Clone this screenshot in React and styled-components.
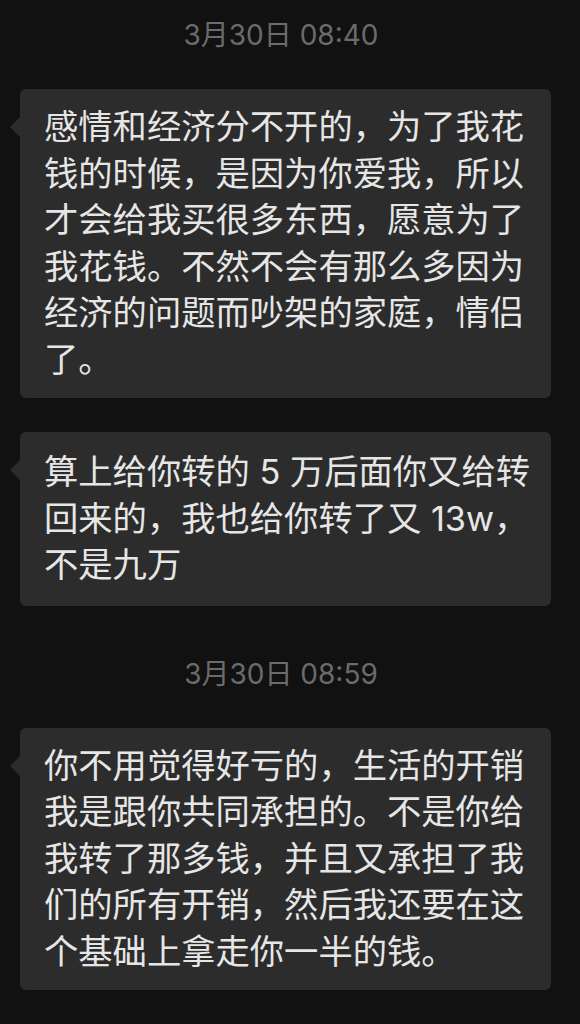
import React from "react";
import styled, { createGlobalStyle } from "styled-components";

const GlobalStyle = createGlobalStyle`
  html, body {
    margin: 0;
    padding: 0;
    background: #111111;
  }
  body {
    font-family: Inter, "Noto Sans CJK SC", sans-serif;
    -webkit-font-smoothing: antialiased;
  }
`;

const Screen = styled.div`
  width: 580px;
  height: 1024px;
  overflow: hidden;
  background: #111111;
  display: flex;
  flex-direction: column;
  padding-top: 17px;
  box-sizing: border-box;
`;

const Time = styled.div`
  text-align: center;
  color: #6b6b6b;
  font-size: 28px;
  line-height: 36px;
  height: 36px;
  padding-right: 18px;
  margin-top: ${(p) => p.top || 0}px;
  margin-bottom: 36px;
`;

const Bubble = styled.div`
  position: relative;
  margin: ${(p) => p.gap || 0}px 29px 0 20px;
  background: #2c2c2c;
  border-radius: 6px;
  padding: ${(p) => p.pad || 15}px 24px;
  color: #e6e6e6;
  font-size: 34.3px;
  line-height: 46.5px;

  &::before {
    content: "";
    position: absolute;
    left: -10px;
    top: 28px;
    border-style: solid;
    border-width: 10px 10px 10px 0;
    border-color: transparent #2c2c2c transparent transparent;
  }
`;

const Line = styled.div`
  white-space: nowrap;
`;

const messages = [
  {
    time: "3月30日 08:40",
    items: [
      {
        pad: 15,
        lines: [
          "感情和经济分不开的，为了我花",
          "钱的时候，是因为你爱我，所以",
          "才会给我买很多东西，愿意为了",
          "我花钱。不然不会有那么多因为",
          "经济的问题而吵架的家庭，情侣",
          "了。",
        ],
      },
      {
        pad: 17,
        lines: [
          "算上给你转的 5 万后面你又给转",
          "回来的，我也给你转了又 13w，",
          "不是九万",
        ],
      },
    ],
  },
  {
    time: "3月30日 08:59",
    items: [
      {
        pad: 15,
        lines: [
          "你不用觉得好亏的，生活的开销",
          "我是跟你共同承担的。不是你给",
          "我转了那多钱，并且又承担了我",
          "们的所有开销，然后我还要在这",
          "个基础上拿走你一半的钱。",
        ],
      },
    ],
  },
];

export default function App() {
  return (
    <>
      <GlobalStyle />
      <Screen>
        {messages.map((group, gi) => (
          <React.Fragment key={gi}>
            <Time top={gi === 0 ? 0 : 50}>{group.time}</Time>
            {group.items.map((m, i) => (
              <Bubble key={i} pad={m.pad} gap={i === 0 ? 0 : 34}>
                {m.lines.map((l, li) => (
                  <Line key={li}>{l}</Line>
                ))}
              </Bubble>
            ))}
          </React.Fragment>
        ))}
      </Screen>
    </>
  );
}
